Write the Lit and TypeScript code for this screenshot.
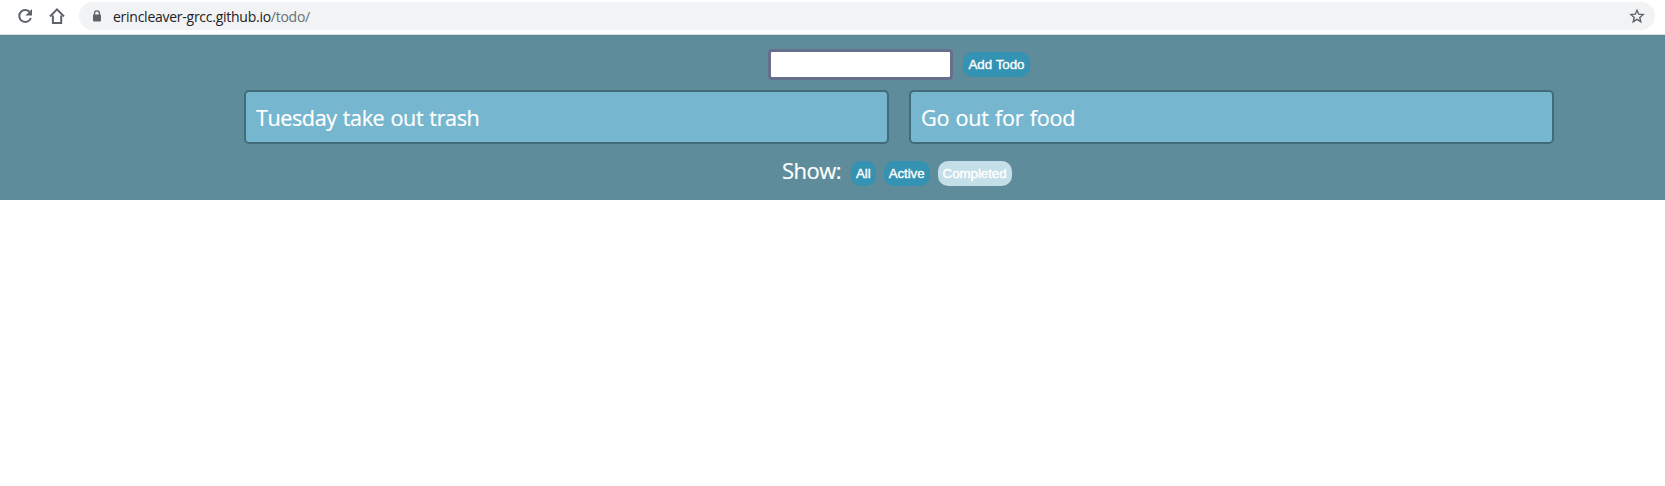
import { LitElement, html, css } from "lit";
import { customElement, property, state } from "lit/decorators.js";
import { styleMap } from "lit/directives/style-map.js";

@customElement("browser-bar")
class BrowserBar extends LitElement {
  static styles = css`
    :host {
      display: block;
    }
    .bar {
      display: flex;
      box-sizing: border-box;
      height: 35px;
      padding: 2px 10px 0 16px;
      background: #fff;
      border-bottom: 1px solid #dadce0;
    }
    svg {
      display: block;
      flex: none;
    }
    .reload {
      margin: 5px 15px 0 0;
    }
    .home {
      margin: 5px 13px 0 0;
    }
    .address {
      flex: 1;
      display: flex;
      align-items: center;
      box-sizing: border-box;
      height: 28px;
      padding: 0 10px 0 13px;
      border-radius: 14px;
      background: #f1f3f4;
    }
    .url {
      flex: 1;
      margin-left: 11px;
      padding-top: 1px;
      font: 14px/20px "Open Sans", "Noto Sans", sans-serif;
      letter-spacing: -0.26px;
      color: #202124;
      white-space: nowrap;
    }
    .path {
      color: #6b6f74;
    }
  `;

  render() {
    return html`
      <div class="bar">
        <svg class="reload" width="18" height="18" viewBox="0 0 18 18">
          <path d="M14.3 5.7A6 6 0 1 0 14.9 11" fill="none" stroke="#5f6368" stroke-width="2" />
          <path d="M16 2v6.6H9.4z" fill="#5f6368" />
        </svg>
        <svg class="home" width="17" height="18" viewBox="0 0 17 18">
          <path d="M3.9 8.6v7.3h8.3V8.6" fill="none" stroke="#5f6368" stroke-width="2" />
          <path d="M1 9.5 8 2.4l7 7.1" fill="none" stroke="#5f6368" stroke-width="2" />
        </svg>
        <div class="address">
          <svg width="10" height="12" viewBox="0 0 10 12">
            <path d="M2.5 5V3.3a2.4 2.4 0 0 1 4.9 0V5" fill="none" stroke="#5f6368" stroke-width="1.3" />
            <rect x="1" y="4.4" width="8" height="7" rx="0.8" fill="#5f6368" />
          </svg>
          <span class="url">erincleaver-grcc.github.io<span class="path">/todo/</span></span>
          <svg width="16" height="16" viewBox="0 0 16 16">
            <path
              d="M8 2.3l1.7 3.9 4.4.4-3.3 2.8 1 4.3L8 11.4l-3.8 2.3 1-4.3-3.3-2.8 4.4-.4z"
              fill="none" stroke="#5f6368" stroke-width="1.4"
            />
          </svg>
        </div>
      </div>
    `;
  }
}

@customElement("todo-card")
class TodoCard extends LitElement {
  @property() label = "";
  @property({ type: Number }) tracking = 0;

  static styles = css`
    :host {
      display: block;
      box-sizing: border-box;
      height: 54px;
      padding: 0 10px;
      border: 2px solid #426b79;
      border-radius: 5px;
      background: #76b6cf;
      color: #fff;
      font: 21.6px/51px "Open Sans", "Noto Sans", sans-serif;
      word-spacing: 1px;
      -webkit-text-stroke: 0.2px #fff;
      white-space: nowrap;
    }
  `;

  render() {
    return html`<span style=${styleMap({ letterSpacing: `${this.tracking}px` })}>${this.label}</span>`;
  }
}

@customElement("app-root")
class AppRoot extends LitElement {
  @state() todos = [
    { label: "Tuesday take out trash", tracking: -0.42 },
    { label: "Go out for food", tracking: -0.25 },
  ];
  @state() filter = "Completed";

  static styles = css`
    :host {
      display: block;
      min-height: 486px;
      background: #fff;
    }
    .app {
      display: flex;
      flex-direction: column;
      box-sizing: border-box;
      height: 165px;
      padding: 14px 111px 0 244px;
      background: #5e8c9b;
      color: #fff;
    }
    .entry {
      display: flex;
      align-items: center;
      gap: 10px;
      height: 31px;
      padding-left: 524px;
    }
    input {
      box-sizing: border-box;
      width: 185px;
      height: 31px;
      margin: 0;
      padding: 2px 6px;
      border: 3px solid #676f8d;
      border-radius: 4px;
      background: #fff;
      outline: none;
    }
    button {
      box-sizing: border-box;
      height: 25px;
      margin: 0;
      padding: 0 5px;
      border: 0;
      border-radius: 10px;
      background: #3492b2;
      color: #fff;
      font: 13.333px/25px "Liberation Sans", Arial, sans-serif;
      letter-spacing: -0.06px;
      -webkit-text-stroke: 0.35px #fff;
      white-space: nowrap;
    }
    .add {
      width: 67px;
      letter-spacing: 0;
    }
    .selected {
      background: #c5dfe8;
    }
    .list {
      display: grid;
      grid-template-columns: 1fr 1fr;
      gap: 20px;
      margin-top: 10px;
    }
    .filters {
      display: flex;
      gap: 8px;
      margin-top: 17px;
      padding-left: 538px;
      height: 25px;
    }
    .show {
      width: 61px;
      font: 22px/18px "Open Sans", "Noto Sans", sans-serif;
      letter-spacing: -0.55px;
      -webkit-text-stroke: 0.2px #fff;
    }
  `;

  render() {
    return html`
      <browser-bar></browser-bar>
      <main class="app">
        <div class="entry">
          <input type="text" aria-label="New todo" />
          <button class="add">Add Todo</button>
        </div>
        <div class="list">
          ${this.todos.map((t) => html`<todo-card .label=${t.label} .tracking=${t.tracking}></todo-card>`)}
        </div>
        <div class="filters">
          <span class="show">Show:</span>
          ${["All", "Active", "Completed"].map(
            (f) => html`<button class=${f === this.filter ? "selected" : ""} @click=${() => (this.filter = f)}>${f}</button>`
          )}
        </div>
      </main>
    `;
  }
}
